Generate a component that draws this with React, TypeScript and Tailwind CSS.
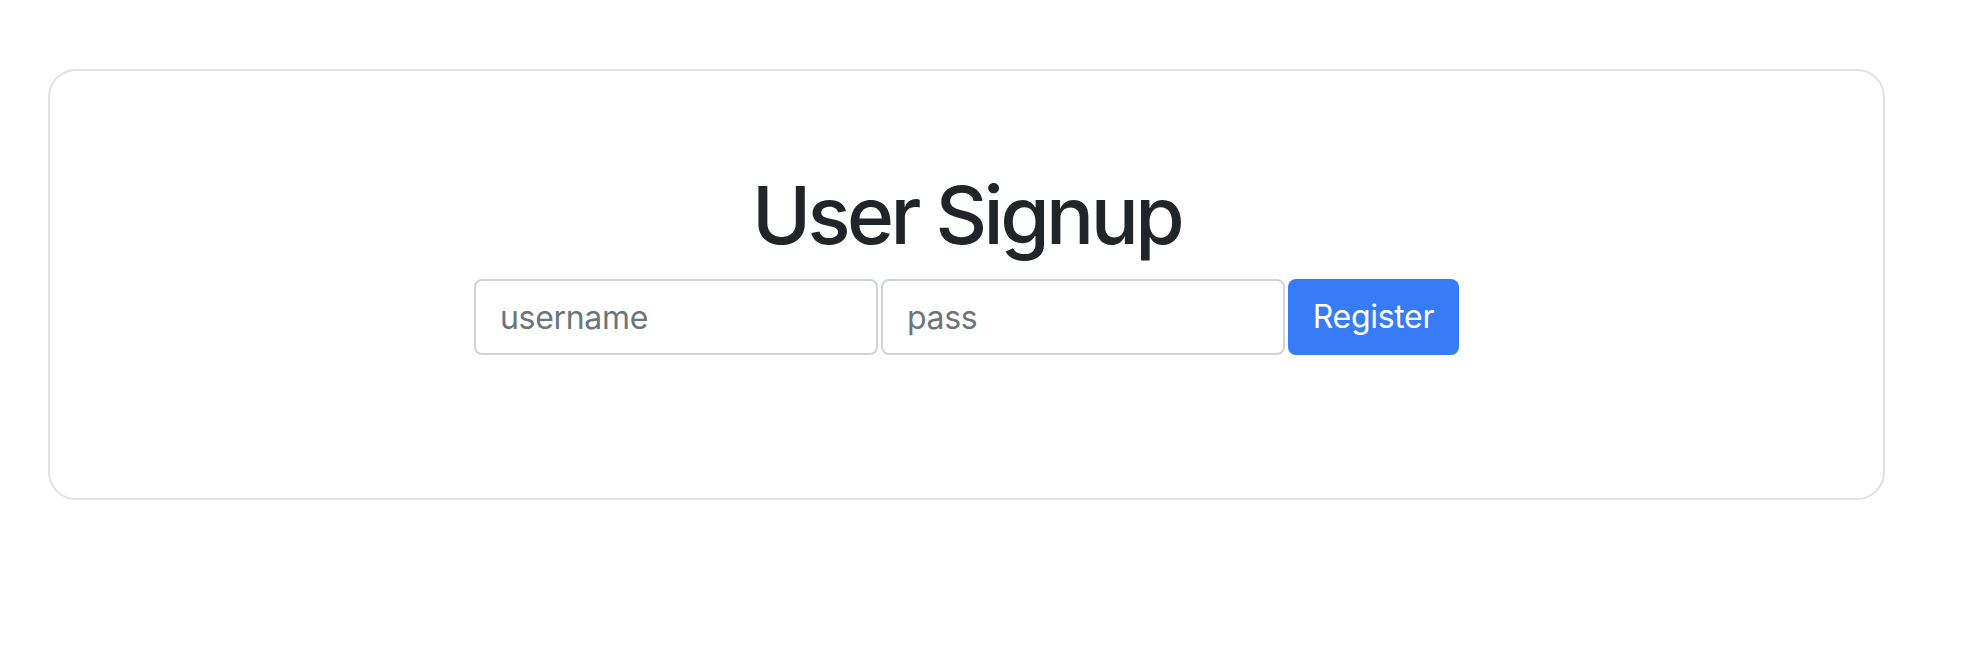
import React from 'react';

const App: React.FC = () => {
  return (
    <div className="min-h-[660px] bg-white pt-[69px] font-['Inter','Noto_Sans',sans-serif]">
      <div className="ml-[48px] w-[1837px] rounded-[28px] border-2 border-[#dee2e6] pb-[143px] pt-[96px]">
        <h1 className="mb-[16px] text-center text-[80px] font-medium leading-[1.2] tracking-[-0.045em] text-[#212529]">User Signup</h1>
        <form className="flex justify-center gap-[3px]" onSubmit={(e) => e.preventDefault()}>
          <input
            type="text"
            placeholder="username"
            className="h-[76px] w-[404px] rounded-[8px] border-2 border-[#ced4da] bg-white px-[24px] text-[32px] tracking-[-0.01em] text-[#212529] outline-none placeholder:text-[#6c757d]"
          />
          <input
            type="password"
            placeholder="pass"
            className="h-[76px] w-[404px] rounded-[8px] border-2 border-[#ced4da] bg-white px-[24px] text-[32px] tracking-[-0.01em] text-[#212529] outline-none placeholder:text-[#6c757d]"
          />
          <button
            type="submit"
            className="h-[76px] w-[171px] rounded-[8px] bg-[#377bf6] text-[32px] tracking-[-0.01em] text-white"
          >
            Register
          </button>
        </form>
      </div>
    </div>
  );
};

export default App;
